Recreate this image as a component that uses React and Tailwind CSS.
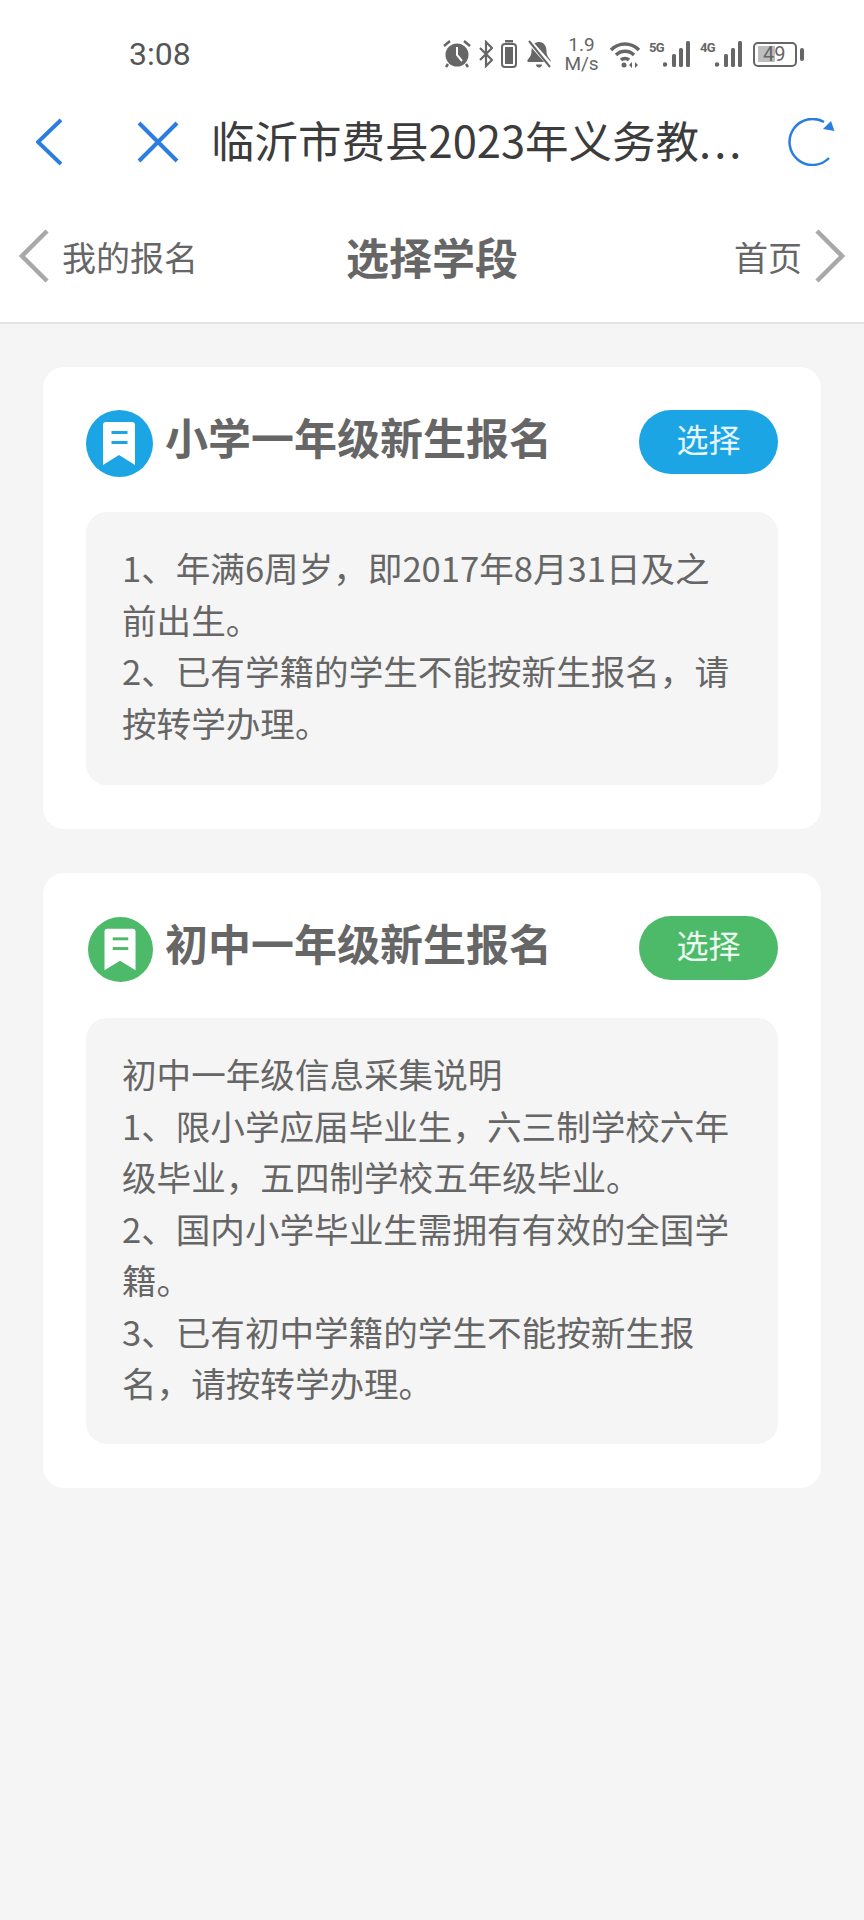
import React from 'react';

function Bars() {
  return (
    <svg width="28" height="26" viewBox="0 0 28 26" fill="#666">
      <circle cx="2" cy="23.500" r="2.200" />
      <rect x="9" y="13" width="4" height="13" rx="1.500" />
      <rect x="16" y="7" width="4" height="19" rx="1.500" />
      <rect x="23" y="0" width="4" height="26" rx="1.500" />
    </svg>
  );
}

function StatusIcons() {
  return (
    <div className="flex items-center text-[#666]">
      {/* alarm */}
      <svg width="30" height="28" viewBox="0 0 30 28">
        <circle cx="15" cy="15" r="11.500" fill="#666" />
        <path d="M15 7v8l5 6" stroke="#fff" strokeWidth="2" fill="none" />
        <path d="M2 6l6-5M28 6l-6-5" stroke="#666" strokeWidth="2.500" fill="none" />
        <path d="M6 24l-2 3M24 24l2 3" stroke="#666" strokeWidth="2.500" />
      </svg>
      {/* bluetooth */}
      <svg width="14" height="28" viewBox="0 0 14 28" className="ml-[7px]" fill="none" stroke="#666" strokeWidth="2.200">
        <path d="M1 8l12 12-6 6V2l6 6L1 20" />
      </svg>
      {/* battery saver */}
      <svg width="16" height="28" viewBox="0 0 16 28" className="ml-2">
        <rect x="4" y="0" width="8" height="2.500" fill="#666" />
        <rect x="1" y="4" width="14" height="23" rx="3" fill="none" stroke="#666" strokeWidth="2" />
        <rect x="4" y="7" width="8" height="17" fill="#666" />
      </svg>
      {/* muted bell */}
      <svg width="26" height="28" viewBox="0 0 26 28" className="ml-[9px]">
        <path d="M13 2c-5 0-7.500 4-7.500 9 0 5-2.500 7-4 9v2h23v-2c-1.500-2-4-4-4-9 0-5-2.500-9-7.500-9z" fill="#666" />
        <path d="M10 24.500h6c0 2-1.500 3-3 3s-3-1-3-3z" fill="#666" />
        <path d="M3 1l22 25" stroke="#fff" strokeWidth="5" />
        <path d="M3 1l21 26" stroke="#666" strokeWidth="2" />
      </svg>
      {/* speed */}
      <div className="ml-[13px] w-[33px] flex flex-col items-center text-[19px] leading-[19px] font-['Roboto',sans-serif]">
        <span>1.9</span>
        <span>M/s</span>
      </div>
      {/* wifi */}
      <svg width="32" height="28" viewBox="0 0 32 28" className="ml-[11px]" fill="none" stroke="#666" strokeWidth="3.500">
        <path d="M2 10c8-8 20-8 28 0" />
        <path d="M7 15c5-5 13-5 18 0" />
        <path d="M12 20c2-2 6-2 8 0" />
        <circle cx="15" cy="25" r="2.500" fill="#666" stroke="none" />
        <path d="M23 22v6l-3-3zM26 22v6l3-3z" fill="#666" stroke="none" />
      </svg>
      <div className="ml-2 flex items-start">
        <span className="w-[14px] text-[13px] leading-[13px] font-bold tracking-tighter font-['Roboto',sans-serif]">5G</span>
        <Bars />
      </div>
      <div className="ml-[9px] flex items-start">
        <span className="w-[15px] text-[13px] leading-[13px] font-bold tracking-tighter font-['Roboto',sans-serif]">4G</span>
        <Bars />
      </div>
      {/* battery */}
      <div className="ml-[10px] w-[44px] h-[25px] border-2 border-[#666] rounded-[5px] flex items-center relative">
        <div className="ml-[3px] w-[17px] h-[16px] bg-[#bdbdbd]"></div>
        <span className="absolute left-[8px] top-0 text-[20px] leading-[21px] font-['Roboto',sans-serif]">49</span>
      </div>
      <div className="ml-[3px] w-[4px] h-[13px] bg-[#666] rounded-sm"></div>
    </div>
  );
}

function BookmarkBadge({ fill, size }) {
  return (
    <div className="w-[67px] flex justify-end shrink-0">
      <svg width={size} height={size} viewBox="0 0 67 67">
        <circle cx="33.500" cy="33.500" r="33.500" fill={fill} />
        <path d="M17 15a3 3 0 0 1 3-3h26a3 3 0 0 1 3 3v40l-16-10-16 10z" fill="#fff" />
        <rect x="25.500" y="21" width="16" height="3" fill={fill} />
        <rect x="25.500" y="31" width="16" height="3" fill={fill} />
      </svg>
    </div>
  );
}

function StageCard({ title, badge, badgeSize, button, bodyPad, lines }) {
  return (
    <div className="bg-white rounded-[21px] px-[43px] pt-[43px] pb-[44px]">
      <div className="flex items-center h-[67px]">
        <BookmarkBadge fill={badge} size={badgeSize} />
        <h2 className="ml-3 -mt-[14px] text-[43px] leading-[67px] font-bold text-[#666]">{title}</h2>
        <button className={`ml-auto -mt-[3px] pb-2 w-[139px] h-[64px] rounded-full text-[32px] text-white/90 ${button}`}>选择</button>
      </div>
      <div className={`mt-[35px] bg-[#f5f5f5] rounded-[21px] px-[36px] pt-[30px] text-[34.600px] leading-[51.500px] text-[#666] ${bodyPad}`}>
        {lines.map((line) => (
          <p key={line}>{line}</p>
        ))}
      </div>
    </div>
  );
}

export default function App() {
  return (
    <div className="w-[864px] h-[1920px] bg-[#f5f5f5] overflow-hidden font-['Noto_Sans_CJK_SC','Noto_Sans',sans-serif]">
      <div className="bg-white border-b-2 border-[#e3e3e3] h-[324px]">
        {/* status bar */}
        <div className="h-[108px] pl-[129px] pr-[60px] flex items-center justify-between">
          <span className="text-[32px] text-[#555] font-['Roboto',sans-serif]">3:08</span>
          <StatusIcons />
        </div>

        {/* browser title row */}
        <div className="h-[68px] flex items-center pl-[36px] pr-[28px]">
          <svg width="26" height="48" viewBox="0 0 26 48" fill="none" stroke="#2a7de1" strokeWidth="4">
            <path d="M25 2L2 24l23 22" />
          </svg>
          <svg width="44" height="44" viewBox="0 0 44 44" className="ml-[74px]" fill="none" stroke="#2a7de1" strokeWidth="4">
            <path d="M3 3l38 38M41 3L3 41" />
          </svg>
          <span className="ml-[31px] pb-[5px] w-[540px] text-[43.500px] leading-[68px] text-[#3c3c3c] whitespace-nowrap">
            临沂市费县2023年义务教<span className="tracking-[3px]">...</span>
          </span>
          <svg width="48" height="48" viewBox="0 0 48 48" className="ml-auto" fill="none" stroke="#2a7de1" strokeWidth="2.500">
            <path d="M41 40A23 23 0 1 1 36 4" />
            <path d="M46.500 13L35 11l8-8z" fill="#2a7de1" stroke="none" />
          </svg>
        </div>

        {/* page title row */}
        <div className="mt-[46px] h-[68px] flex items-center pl-[19px] pr-[19px] relative">
          <svg width="30" height="54" viewBox="0 0 30 54" fill="none" stroke="#a8a8a8" strokeWidth="4.500">
            <path d="M28 2L3 27l25 25" />
          </svg>
          <span className="ml-[13px] text-[34px] text-[#666]">我的报名</span>
          <h1 className="absolute left-[346px] top-0 text-[43px] leading-[68px] font-bold text-[#666]">选择学段</h1>
          <span className="ml-auto text-[34px] text-[#666]">首页</span>
          <svg width="30" height="54" viewBox="0 0 30 54" className="ml-[13px]" fill="none" stroke="#a8a8a8" strokeWidth="4.500">
            <path d="M2 2l25 25L2 52" />
          </svg>
        </div>
      </div>

      <div className="px-[43px] pt-[43px] flex flex-col gap-[44px]">
        <StageCard
          title="小学一年级新生报名"
          badge="#1ca5e5"
          badgeSize={67}
          button="bg-[#1ca5e5]"
          bodyPad="pb-[37px]"
          lines={[
            '1、年满6周岁，即2017年8月31日及之',
            '前出生。',
            '2、已有学籍的学生不能按新生报名，请',
            '按转学办理。',
          ]}
        />
        <StageCard
          title="初中一年级新生报名"
          badge="#4dba6a"
          badgeSize={65}
          button="bg-[#4dba6a]"
          bodyPad="pb-[35px]"
          lines={[
            '初中一年级信息采集说明',
            '1、限小学应届毕业生，六三制学校六年',
            '级毕业，五四制学校五年级毕业。',
            '2、国内小学毕业生需拥有有效的全国学',
            '籍。',
            '3、已有初中学籍的学生不能按新生报',
            '名，请按转学办理。',
          ]}
        />
      </div>
    </div>
  );
}
